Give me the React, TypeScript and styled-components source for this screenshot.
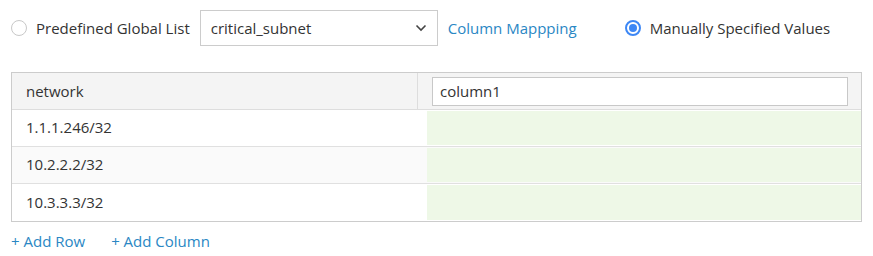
import React, { useState } from "react";
import styled, { createGlobalStyle } from "styled-components";

const GlobalStyle = createGlobalStyle`
  body {
    margin: 0;
    background: #fff;
    font-family: "Open Sans", "Noto Sans", sans-serif;
    color: #333;
  }
`;

const Page = styled.div`
  padding: 10px 11px 0 11px;
  width: 851px;
`;

const Toolbar = styled.div`
  display: flex;
  align-items: center;
  height: 36px;
`;

const RadioLabel = styled.label`
  display: flex;
  align-items: center;
  gap: 9px;
  font-size: 15px;
  color: #333;
  cursor: pointer;
`;

const RadioDot = styled.span<{ $checked: boolean }>`
  box-sizing: border-box;
  width: 16px;
  height: 16px;
  border-radius: 50%;
  border: ${(p) => (p.$checked ? "2px solid #3d87f5" : "1px solid #c8c8c8")};
  display: flex;
  align-items: center;
  justify-content: center;
  background: #fff;

  &::after {
    content: "";
    display: ${(p) => (p.$checked ? "block" : "none")};
    width: 8px;
    height: 8px;
    border-radius: 50%;
    background: #3d87f5;
  }
`;

const Select = styled.div`
  box-sizing: border-box;
  margin-left: 10px;
  width: 238px;
  height: 36px;
  border: 1px solid #ccc;
  display: flex;
  align-items: center;
  justify-content: space-between;
  padding: 0 10px 0 10px;
  font-size: 15px;
  color: #333;
`;

const LinkText = styled.a<{ $gap?: number }>`
  margin-left: ${(p) => p.$gap ?? 0}px;
  color: #2a87c4;
  font-size: 15px;
  text-decoration: none;
  cursor: pointer;
`;

const ManualWrap = styled.div`
  margin-left: 48px;
`;

const Table = styled.div`
  margin-top: 26px;
  border: 1px solid #ccc;
  display: grid;
  grid-template-columns: 405px 1fr;
`;

const HeadCell = styled.div<{ $first?: boolean }>`
  box-sizing: border-box;
  height: 37px;
  background: #f4f4f4;
  border-bottom: 1px solid #ddd;
  border-left: ${(p) => (p.$first ? "none" : "1px solid #ddd")};
  display: flex;
  align-items: center;
  padding: 0 13px 0 14px;
  font-size: 15px;
`;

const HeadInput = styled.input`
  box-sizing: border-box;
  width: 100%;
  height: 29px;
  border: 1px solid #c8c8c8;
  background: #fff;
  padding: 0 7px;
  font-family: inherit;
  font-size: 15px;
  color: #333;
  outline: none;
`;

const BodyCell = styled.div<{ $striped: boolean; $last: boolean }>`
  box-sizing: border-box;
  height: 37px;
  background: ${(p) => (p.$striped ? "#fafafa" : "#fff")};
  border-bottom: ${(p) => (p.$last ? "none" : "1px solid #e0e0e0")};
  display: flex;
  align-items: center;
  padding: 0 14px 2px 14px;
  font-size: 15px;
`;

const ValueCell = styled.div<{ $striped: boolean; $last: boolean }>`
  box-sizing: border-box;
  height: 37px;
  background: ${(p) => (p.$striped ? "#fafafa" : "#fff")};
  border-bottom: ${(p) => (p.$last ? "none" : "1px solid #e0e0e0")};
  padding: 1px 0 1px 10px;
  display: flex;
`;

const ValueFill = styled.div`
  flex: 1;
  background: #eef8e7;
`;

const Actions = styled.div`
  display: flex;
  margin-top: 9px;
  gap: 26px;
`;

const Chevron = () => (
  <svg width="12" height="8" viewBox="0 0 12 8" fill="none">
    <path d="M1.5 1.5 L6 6 L10.5 1.5" stroke="#444" strokeWidth="1.6" />
  </svg>
);

const rows = ["1.1.1.246/32", "10.2.2.2/32", "10.3.3.3/32"];

export default function App() {
  const [mode, setMode] = useState<"global" | "manual">("manual");
  const [colName, setColName] = useState("column1");

  return (
    <Page>
      <GlobalStyle />
      <Toolbar>
        <RadioLabel onClick={() => setMode("global")}>
          <RadioDot $checked={mode === "global"} />
          Predefined Global List
        </RadioLabel>
        <Select>
          critical_subnet
          <Chevron />
        </Select>
        <LinkText $gap={10}>Column Mappping</LinkText>
        <ManualWrap>
          <RadioLabel onClick={() => setMode("manual")}>
            <RadioDot $checked={mode === "manual"} />
            Manually Specified Values
          </RadioLabel>
        </ManualWrap>
      </Toolbar>
      <Table>
        <HeadCell $first>network</HeadCell>
        <HeadCell>
          <HeadInput value={colName} onChange={(e) => setColName(e.target.value)} />
        </HeadCell>
        {rows.map((r, i) => (
          <React.Fragment key={r}>
            <BodyCell $striped={i === 1} $last={i === rows.length - 1}>
              {r}
            </BodyCell>
            <ValueCell $striped={i === 1} $last={i === rows.length - 1}>
              <ValueFill />
            </ValueCell>
          </React.Fragment>
        ))}
      </Table>
      <Actions>
        <LinkText>+ Add Row</LinkText>
        <LinkText>+ Add Column</LinkText>
      </Actions>
    </Page>
  );
}
